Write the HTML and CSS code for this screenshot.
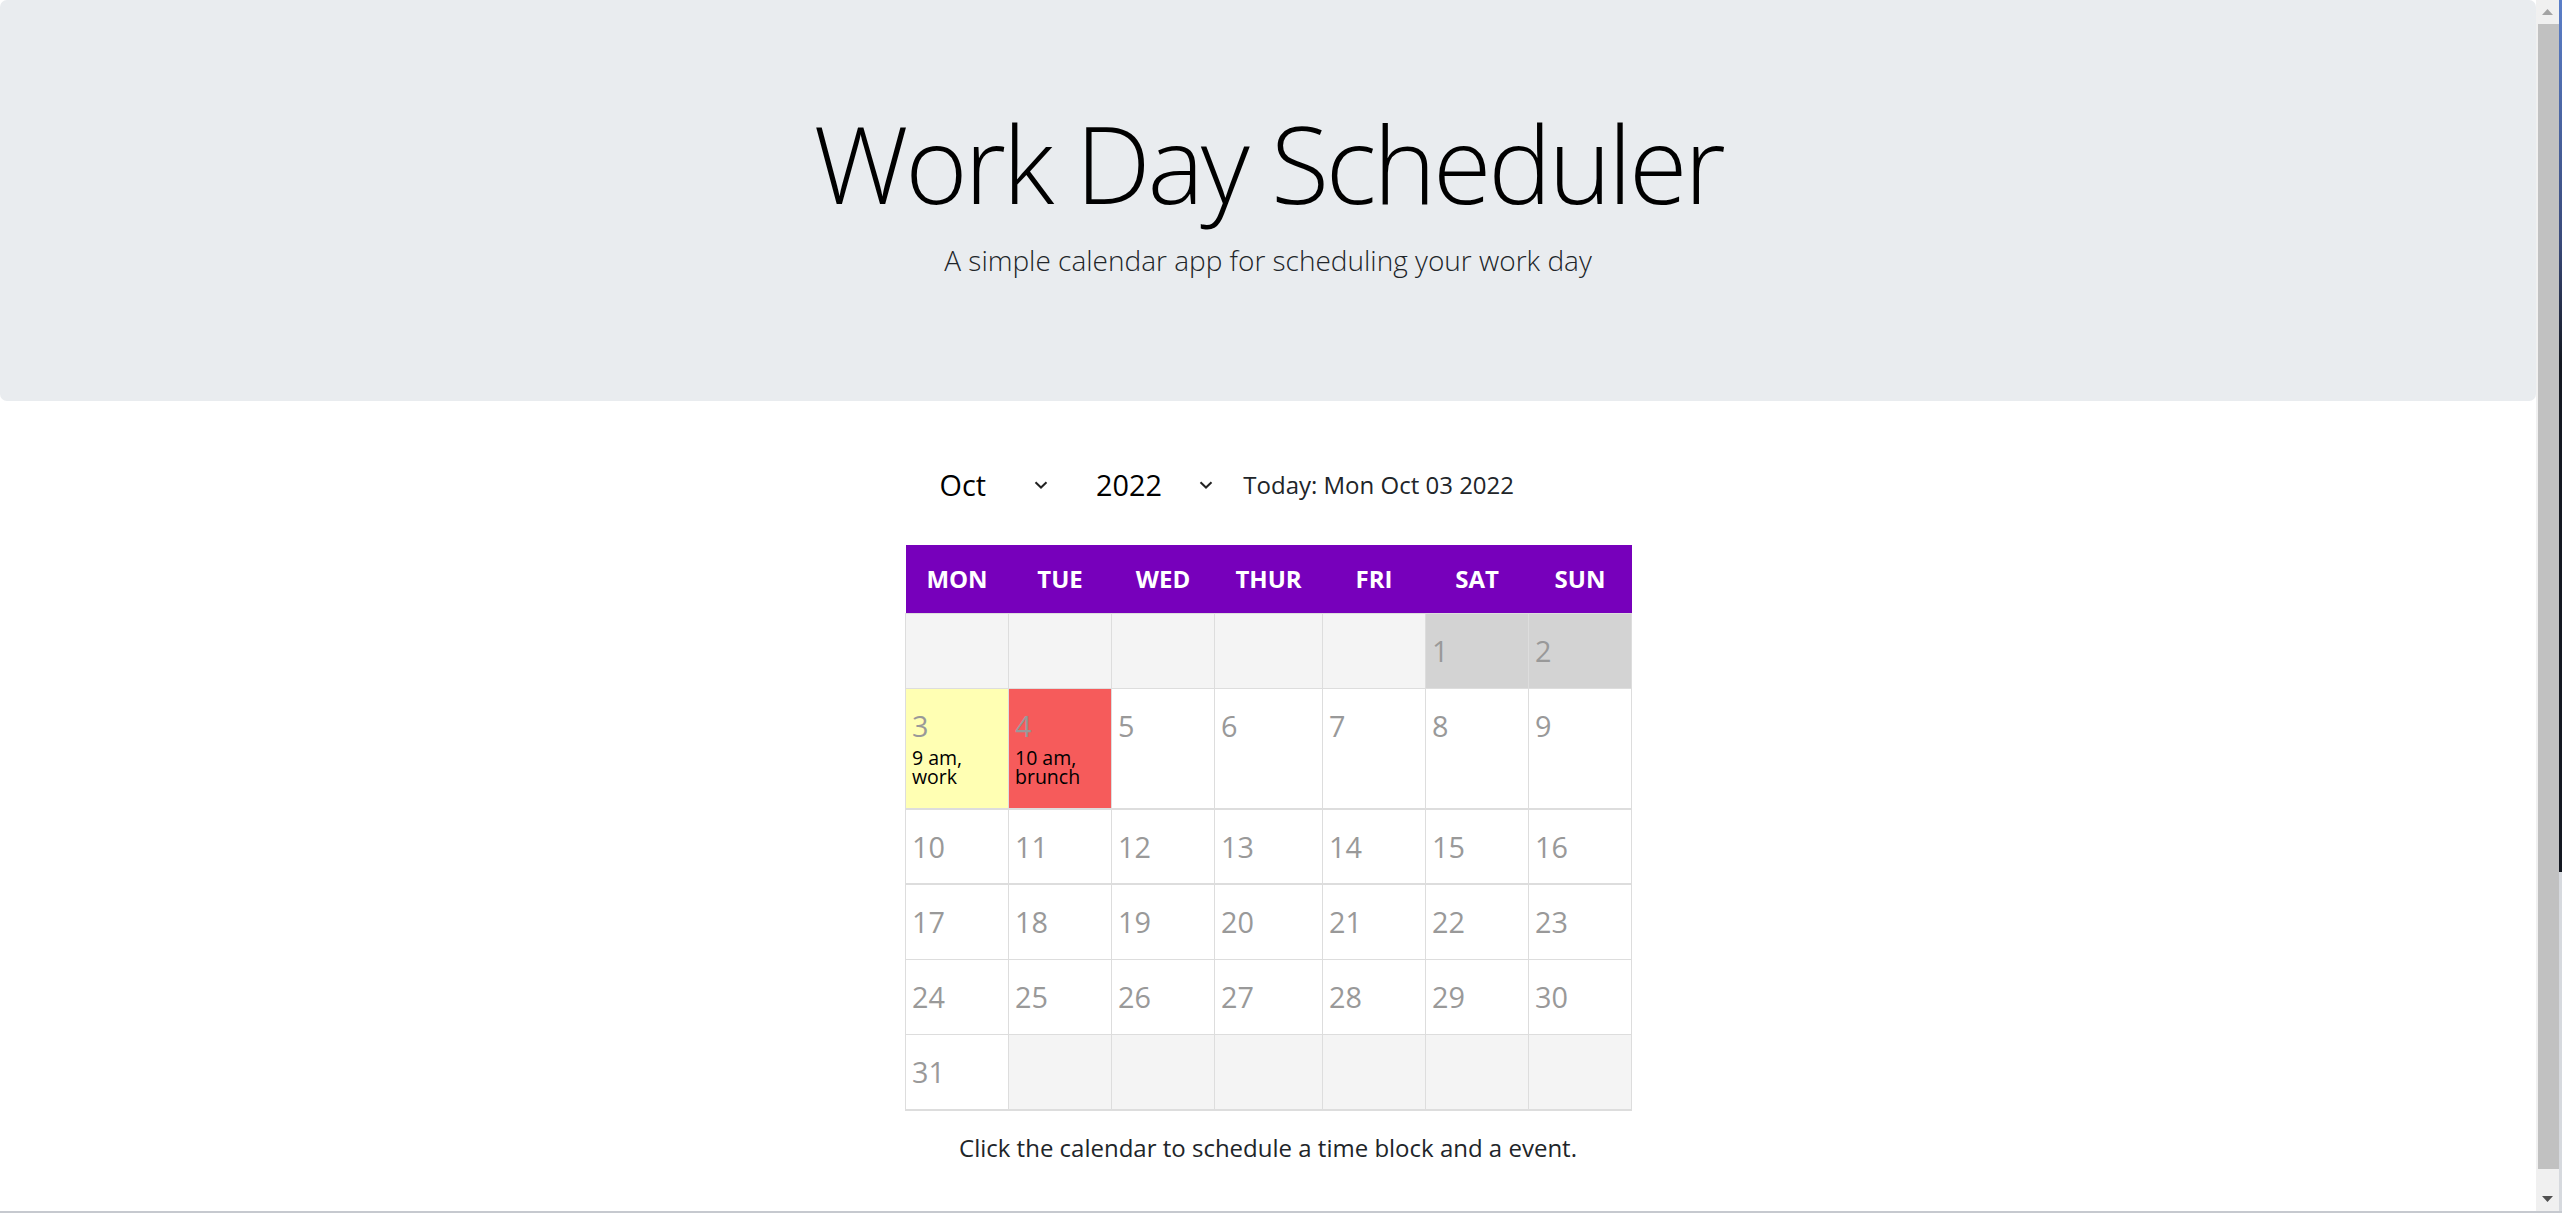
FILE: index.html
```html
<!DOCTYPE html>
<html lang="en">
<head>
<meta charset="utf-8">
<title>Work Day Scheduler</title>
<link rel="stylesheet" href="styles.css">
</head>
<body>
<div class="window">
  <div class="page">
    <header class="jumbotron">
      <h1 class="title">Work Day Scheduler</h1>
      <p class="lead">A simple calendar app for scheduling your work day</p>
    </header>
    <main class="calendar-wrap">
      <div class="controls">
        <span class="select-box month-box">
          <select class="month"><option>Oct</option></select>
          <svg class="chev" width="14" height="8" viewBox="0 0 14 8"><path d="M1.5 1.2 L7 6.5 L12.5 1.2" fill="none" stroke="#222" stroke-width="2"/></svg>
        </span>
        <span class="select-box year-box">
          <select class="year"><option>2022</option></select>
          <svg class="chev" width="14" height="8" viewBox="0 0 14 8"><path d="M1.5 1.2 L7 6.5 L12.5 1.2" fill="none" stroke="#222" stroke-width="2"/></svg>
        </span>
        <span class="today">Today: Mon Oct 03 2022</span>
      </div>
      <table class="calendar">
        <colgroup>
          <col class="c-std"><col class="c-std"><col class="c-std"><col class="c-wide"><col class="c-std"><col class="c-std"><col class="c-std">
        </colgroup>
        <thead>
          <tr><th>MON</th><th>TUE</th><th>WED</th><th>THUR</th><th>FRI</th><th>SAT</th><th>SUN</th></tr>
        </thead>
        <tbody>
          <tr>
            <td class="empty"></td><td class="empty"></td><td class="empty"></td><td class="empty"></td><td class="empty"></td>
            <td class="past"><div class="num">1</div></td>
            <td class="past"><div class="num">2</div></td>
          </tr>
          <tr class="tall">
            <td class="present"><div class="num">3</div><div class="event">9 am, work</div></td>
            <td class="booked"><div class="num">4</div><div class="event">10 am, brunch</div></td>
            <td><div class="num">5</div></td>
            <td><div class="num">6</div></td>
            <td><div class="num">7</div></td>
            <td><div class="num">8</div></td>
            <td><div class="num">9</div></td>
          </tr>
          <tr class="thick">
            <td><div class="num">10</div></td><td><div class="num">11</div></td><td><div class="num">12</div></td><td><div class="num">13</div></td><td><div class="num">14</div></td><td><div class="num">15</div></td><td><div class="num">16</div></td>
          </tr>
          <tr>
            <td><div class="num">17</div></td><td><div class="num">18</div></td><td><div class="num">19</div></td><td><div class="num">20</div></td><td><div class="num">21</div></td><td><div class="num">22</div></td><td><div class="num">23</div></td>
          </tr>
          <tr>
            <td><div class="num">24</div></td><td><div class="num">25</div></td><td><div class="num">26</div></td><td><div class="num">27</div></td><td><div class="num">28</div></td><td><div class="num">29</div></td><td><div class="num">30</div></td>
          </tr>
          <tr class="last">
            <td><div class="num">31</div></td>
            <td class="empty"></td><td class="empty"></td><td class="empty"></td><td class="empty"></td><td class="empty"></td><td class="empty"></td>
          </tr>
        </tbody>
      </table>
      <p class="hint">Click the calendar to schedule a time block and a event.</p>
    </main>
  </div>
  <div class="scrollbar">
    <div class="sb-btn"><svg width="11" height="6" viewBox="0 0 11 6"><polygon points="0,6 5.5,0 11,6" fill="#a3a3a3"/></svg></div>
    <div class="sb-thumb"></div>
    <div class="sb-gap"></div>
    <div class="sb-btn"><svg width="11" height="6" viewBox="0 0 11 6"><polygon points="0,0 11,0 5.5,6" fill="#505050"/></svg></div>
  </div>
  <div class="desk"></div>
</div>
<div class="window-edge"></div>
</body>
</html>
```

FILE: styles.css
```css
html, body {
  margin: 0;
  padding: 0;
  height: 100%;
}

body {
  display: flex;
  flex-direction: column;
  background: #ffffff;
  font-family: "Open Sans", "Noto Sans", sans-serif;
  color: #212529;
  overflow: hidden;
}

.window {
  display: flex;
  height: 1211px;
}

.page {
  flex: 1;
  overflow: hidden;
}

.window-edge {
  height: 2px;
  background: #c6c9cf;
}

/* Header / jumbotron */
.jumbotron {
  background: #e9ecef;
  border-radius: 7px;
  padding: 96px 48px 123px;
  margin-bottom: 48px;
  text-align: center;
}

.title {
  margin: 0 0 12px;
  font-family: "Open Sans", "Noto Sans", sans-serif;
  font-weight: 300;
  font-size: 106.5px;
  line-height: 134px;
  letter-spacing: -3.2px;
  color: #000000;
}

.lead {
  margin: 0;
  font-family: "Open Sans", "Noto Sans", sans-serif;
  font-weight: 300;
  font-size: 28px;
  line-height: 36px;
  color: #212529;
}

/* Calendar area */
.calendar-wrap {
  width: 726px;
  margin: 0 auto;
}

.controls {
  display: flex;
  align-items: center;
  height: 72px;
  margin-bottom: 24px;
  padding-left: 34.5px;
}

.select-box {
  display: flex;
  align-items: center;
}

.month-box {
  margin-right: 48px;
}

.year-box {
  margin-right: 30px;
}

.select-box select {
  -webkit-appearance: none;
  appearance: none;
  border: 0;
  outline: 0;
  background: transparent;
  padding: 0;
  margin: 0;
  font-family: "Open Sans", "Noto Sans", sans-serif;
  font-size: 28.8px;
  line-height: 1.2;
  color: #000000;
}

.month {
  width: 94.5px;
}

.year {
  width: 103.3px;
}

.chev {
  display: block;
  flex: none;
}

.today {
  font-size: 24px;
  line-height: 36px;
  color: #212529;
}

.calendar {
  width: 726px;
  border-collapse: collapse;
  table-layout: fixed;
}

.c-std {
  width: 103px;
}

.c-wide {
  width: 108px;
}

.calendar th {
  background: #7700bb;
  color: #ffffff;
  font-size: 24px;
  font-weight: 700;
  line-height: 68px;
  height: 68px;
  padding: 0;
  border: 0;
  text-align: center;
}

.calendar td {
  border: 1px solid #dddddd;
  padding: 14.5px 6px 16.5px;
  vertical-align: top;
  background: #ffffff;
}

.calendar tr.tall td,
.calendar tr.thick td,
.calendar tr.last td {
  border-bottom: 2px solid #dddddd;
}

.calendar tr.thick td {
  padding-bottom: 15.5px;
}

.calendar td.empty {
  background: #f4f4f4;
}

.calendar td.past {
  background: #d3d3d3;
}

.calendar td.present {
  background: #ffffb3;
}

.calendar td.booked {
  background: #f65b5b;
}

.num {
  font-size: 28.8px;
  line-height: 43px;
  color: #999999;
}

.event {
  font-size: 19.5px;
  font-weight: 500;
  line-height: 18.5px;
  color: #000000;
  margin-top: 2.5px;
  margin-bottom: 5.5px;
}

.hint {
  margin: 19px 0 0;
  text-align: center;
  font-size: 24px;
  line-height: 36px;
  color: #212529;
}

/* Browser scrollbar strip */
.scrollbar {
  width: 23px;
  flex: none;
  background: #f0f0f0;
  display: flex;
  flex-direction: column;
}

.sb-btn {
  height: 24px;
  flex: none;
  display: flex;
  align-items: center;
  justify-content: center;
}

.sb-thumb {
  height: 1145px;
  flex: none;
  margin-left: 2px;
  background: #c1c1c1;
}

.sb-gap {
  flex: 1;
}

.desk {
  width: 3px;
  flex: none;
  background: linear-gradient(#5b7fc9 0%, #3a4a7a 20%, #141821 30%, #141821 72%, #d6d9de 72%, #d6d9de 100%);
}
```
